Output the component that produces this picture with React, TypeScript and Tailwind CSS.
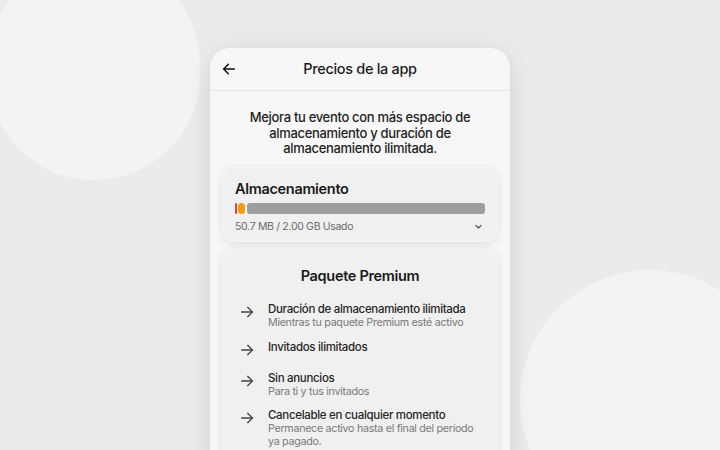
import React from "react";

function ArrowRight() {
  return (
    <svg width="16" height="16" viewBox="0 0 24 24" fill="none" stroke="#444" strokeWidth="2" strokeLinecap="round" strokeLinejoin="round">
      <path d="M4 12h16" />
      <path d="M13 5l7 7-7 7" />
    </svg>
  );
}

const items = [
  { t: "Duración de almacenamiento ilimitada", s: ["Mientras tu paquete Premium esté activo"], mb: "mb-[12px]" },
  { t: "Invitados ilimitados", s: [], mb: "mb-[14px]" },
  { t: "Sin anuncios", s: ["Para ti y tus invitados"], mb: "mb-[11px]" },
  { t: "Cancelable en cualquier momento", s: ["Permanece activo hasta el final del período", "ya pagado."], mb: "mb-0" },
];

export default function App() {
  return (
    <div className="relative w-[720px] h-[450px] overflow-hidden bg-[#ebebeb] tracking-[-0.02em]" style={{ fontFamily: "Inter, 'Noto Sans', sans-serif" }}>
      <div className="absolute left-[-12px] top-[-42px] w-[212px] h-[222px] rounded-full bg-[#f3f3f3]" />
      <div className="absolute left-[520px] top-[270px] w-[260px] h-[260px] rounded-full bg-[#f3f3f3]" />
      <div className="relative flex justify-center pt-[48px]">
        <div className="w-[300px] h-[420px] rounded-t-[20px] bg-[#f7f7f7] shadow-[0_4px_24px_rgba(0,0,0,0.10)] overflow-hidden">
          <div className="relative h-[43px] flex items-center justify-center border-b border-[#e3e3e3]">
            <svg className="absolute left-[11px] top-[13px]" width="16" height="16" viewBox="0 0 24 24" fill="none" stroke="#111" strokeWidth="2.2" strokeLinecap="round" strokeLinejoin="round">
              <path d="M20 12H4" />
              <path d="M11 5l-7 7 7 7" />
            </svg>
            <span className="text-[14.5px] font-medium text-[#1c1c1c]">Precios de la app</span>
          </div>
          <div className="px-[12px]">
            <p className="mt-[19px] mx-auto w-[240px] text-center text-[13px] leading-[15.5px] font-medium text-[#1f1f1f]">
              Mejora tu evento con más espacio de almacenamiento y duración de almacenamiento ilimitada.
            </p>
            <div className="mt-[10px] rounded-[12px] bg-[#f0f0f0] border border-[#f7f7f7] shadow-[0_2px_8px_rgba(0,0,0,0.10)] px-[12px] pt-[11px] pb-[6px]">
              <div className="text-[14.5px] leading-[20px] font-semibold text-[#1a1a1a]">Almacenamiento</div>
              <div className="mt-[4px] flex items-center h-[11px]">
                <div className="w-[2px] h-[11px] bg-[#e0463e] rounded-[1px]" />
                <div className="ml-[1px] w-[7px] h-[11px] bg-[#f39c12] rounded-full" />
                <div className="ml-[2px] flex-1 h-[11px] bg-[#9e9e9e] rounded-[3px]" />
              </div>
              <div className="mt-[5px] flex items-center justify-between">
                <span className="text-[10.5px] leading-[16px] text-[#6b6b6b]">50.7 MB / 2.00 GB Usado</span>
                <svg className="mr-[2px]" width="9" height="9" viewBox="0 0 24 24" fill="none" stroke="#444" strokeWidth="3" strokeLinecap="round" strokeLinejoin="round">
                  <path d="M5 9l7 7 7-7" />
                </svg>
              </div>
            </div>
            <div className="mt-[7px] rounded-[12px] bg-[#f0f0f0] border border-[#f7f7f7] shadow-[0_2px_8px_rgba(0,0,0,0.10)] px-[12px] pt-[16px] h-[220px]">
              <div className="text-center text-[14.5px] leading-[20px] font-semibold text-[#1a1a1a]">Paquete Premium</div>
              <div className="mt-[17px] pl-[4px]">
                {items.map((it) => (
                  <div key={it.t} className={`flex items-start ${it.mb}`}>
                    <div className="w-[21px] pt-[1px] shrink-0 flex">
                      <ArrowRight />
                    </div>
                    <div className="ml-[8px]">
                      <div className="text-[11.5px] leading-[13px] font-medium text-[#262626]">{it.t}</div>
                      {it.s.map((s) => (
                        <div key={s} className="text-[10.75px] leading-[13px] text-[#7a7a7a]">{s}</div>
                      ))}
                    </div>
                  </div>
                ))}
              </div>
            </div>
          </div>
        </div>
      </div>
    </div>
  );
}
